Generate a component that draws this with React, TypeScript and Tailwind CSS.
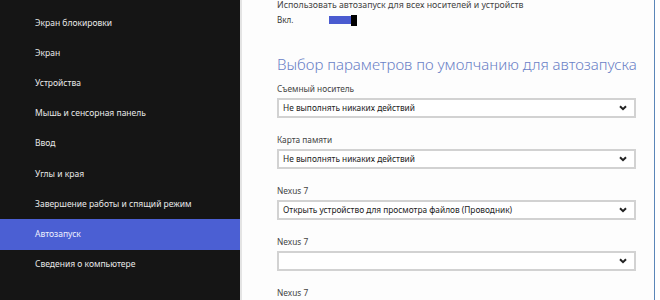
const navItems = [
  "Экран блокировки",
  "Экран",
  "Устройства",
  "Мышь и сенсорная панель",
  "Ввод",
  "Углы и края",
  "Завершение работы и спящий режим",
  "Автозапуск",
  "Сведения о компьютере",
];

const groups = [
  { label: "Съемный носитель", value: "Не выполнять никаких действий" },
  { label: "Карта памяти", value: "Не выполнять никаких действий" },
  { label: "Nexus 7", value: "Открыть устройство для просмотра файлов (Проводник)" },
  { label: "Nexus 7", value: "" },
  { label: "Nexus 7", value: "" },
];

function Chevron() {
  return (
    <svg width="8" height="6" viewBox="0 0 8 6" className="shrink-0">
      <path d="M1 1.2l3 3 3-3" fill="none" stroke="#222" strokeWidth="2" />
    </svg>
  );
}

function SelectBox({ value }: { value: string }) {
  return (
    <div className="flex h-[20px] w-[359px] items-center justify-between border-2 border-[#d2d2d2] bg-white pl-[4px] pr-[7px]">
      <span className="text-[8.3px] leading-none text-[#222]">{value}</span>
      <Chevron />
    </div>
  );
}

export default function App() {
  return (
    <div className="flex h-[300px] w-[660px] overflow-hidden bg-white font-['Noto_Sans',sans-serif]">
      <aside className="w-[240px] shrink-0 bg-[#151515] pt-[8px]">
        {navItems.map((item) => (
          <div
            key={item}
            className={
              item === "Автозапуск"
                ? "flex h-[30.2px] items-center bg-[#4b5fd3] pl-[35px] text-[8.5px] text-[#eef0ff]"
                : "flex h-[30.2px] items-center pl-[35px] text-[8.5px] text-[#e8e8e8]"
            }
          >
            {item}
          </div>
        ))}
      </aside>
      <main className="w-[415px] shrink-0 border-l-2 border-r border-[#e4e4e4] border-r-[#5a86b8] bg-[#fdfdfd] pl-[35px]">
        <p className="text-[8.8px] leading-[10px] text-[#444]">
          Использовать автозапуск для всех носителей и устройств
        </p>
        <div className="mt-[4px] flex h-[12px] items-center">
          <span className="w-[52px] shrink-0 text-[8px] text-[#333]">Вкл.</span>
          <div className="h-[8px] w-[22px] shrink-0 bg-[#4a5bd0]" />
          <div className="h-[11px] w-[6px] shrink-0 bg-black" />
        </div>
        <h2 className="mt-[27px] whitespace-nowrap text-[15px] font-light leading-[22px] text-[#6a7fc6]">
          Выбор параметров по умолчанию для автозапуска
        </h2>
        <div className="mt-[8px] flex flex-col">
          {groups.map((g, i) => (
            <div key={i} className="mb-[16px]">
              <div className="h-[12px] text-[8.3px] leading-[12px] text-[#444]">{g.label}</div>
              <div className="mt-[3px]">
                <SelectBox value={g.value} />
              </div>
            </div>
          ))}
        </div>
      </main>
    </div>
  );
}
